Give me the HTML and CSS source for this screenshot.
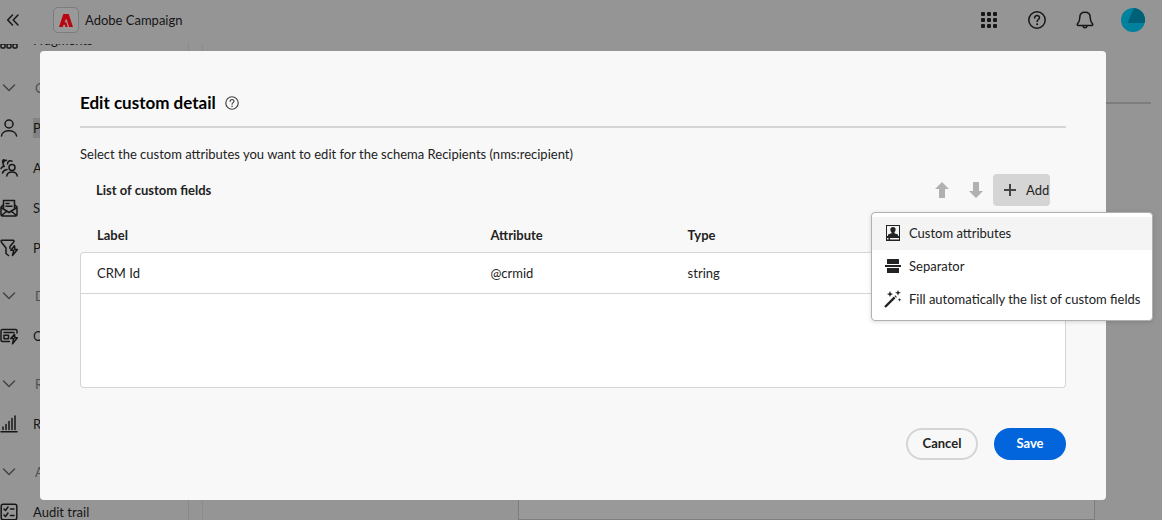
FILE: index.html
```html
<!DOCTYPE html>
<html lang="en">
<head>
<meta charset="utf-8">
<meta name="viewport" content="width=device-width, initial-scale=1">
<title>Adobe Campaign</title>
<link rel="stylesheet" href="styles.css">
</head>
<body>
<div class="app">
  <header class="topbar">
    <button class="icon-button collapse" aria-label="Collapse navigation"><svg width="14" height="14" viewBox="0 0 14 14"><path d="M6.500 2 1.700 7l4.800 5M12 2 7.200 7l4.800 5"/></svg></button>
    <span class="brand-mark"><svg width="14" height="13" viewBox="0 0 14 13"><path class="solid" d="M4.300 0h5.400L14 13h-3.800L8 6.500 7.100 4.500 5.600 8.300h1.700l1.500 4.700H6.500l-.8-2.200H4.500L3.800 13H0z"/></svg></span>
    <span class="brand">Adobe Campaign</span>
    <div class="top-actions">
      <button class="icon-button" aria-label="Apps"><svg class="solid-icon" width="18" height="18" viewBox="0 0 18 18"><rect x="1" y="1" width="4" height="4" rx="1"/><rect x="7" y="1" width="4" height="4" rx="1"/><rect x="13" y="1" width="4" height="4" rx="1"/><rect x="1" y="7" width="4" height="4" rx="1"/><rect x="7" y="7" width="4" height="4" rx="1"/><rect x="13" y="7" width="4" height="4" rx="1"/><rect x="1" y="13" width="4" height="4" rx="1"/><rect x="7" y="13" width="4" height="4" rx="1"/><rect x="13" y="13" width="4" height="4" rx="1"/></svg></button>
      <button class="icon-button" aria-label="Help"><svg width="18" height="18" viewBox="0 0 18 18"><circle cx="9" cy="9" r="8.200"/><path d="M6.600 6.900c0-3.300 5-3 4.900-.2 0 1.800-2.400 1.900-2.400 3.900"/><circle class="solid" cx="9.100" cy="13.300" r="1"/></svg></button>
      <button class="icon-button" aria-label="Notifications"><svg width="18" height="18" viewBox="0 0 18 18"><path d="M9 1.200c-3.300 0-5.200 2.300-5.200 5.200 0 4-1 5-2.200 6.300-.7.800-.3 1.700.7 1.700h13.400c1 0 1.400-.9.700-1.700-1.200-1.300-2.200-2.300-2.200-6.300 0-2.900-1.900-5.200-5.200-5.200zM7 15.200c.3 2.100 3.700 2.100 4 0"/></svg></button>
      <button class="icon-button" aria-label="Account"><svg class="avatar" width="24" height="24" viewBox="0 0 24 24"><circle cx="12" cy="12" r="12" fill="#00819e"/><path d="M13 0a12 12 0 0 1 10.600 15H6.500z" fill="#006078"/></svg></button>
    </div>
  </header>
  <div class="workspace">
    <nav class="sidebar" aria-label="Main">
      <ul class="nav-list">
        <li><a class="nav-item" href="#"><svg width="18" height="18" viewBox="0 0 18 18"><rect x="1" y="1" width="4" height="4" rx="1"/><rect x="7" y="1" width="4" height="4" rx="1"/><rect x="13" y="1" width="4" height="4" rx="1"/><rect x="1" y="13" width="4" height="4" rx="1"/><rect x="7" y="13" width="4" height="4" rx="1"/><rect x="13" y="13" width="4" height="4" rx="1"/></svg><span>Fragments</span></a></li>
        <li><button class="nav-group"><svg width="18" height="18" viewBox="0 0 18 18"><path d="m3.500 6 5.500 5.500L14.500 6"/></svg>CRM</button></li>
        <li><a class="nav-item" href="#" aria-current="page"><svg width="18" height="18" viewBox="0 0 18 18"><circle cx="9" cy="5" r="4"/><path d="M1.500 17c.5-7 14.500-7 15 0"/></svg><span>Profiles</span></a></li>
        <li><a class="nav-item" href="#"><svg width="18" height="18" viewBox="0 0 18 18"><circle cx="12" cy="8.500" r="3"/><path d="M6.800 17c.7-5.300 9.700-5.300 10.400 0M7.500 5C7.500 2 10 1 12 2.200M4.200 7.500C2 4.500 3.500 1.200 6.500 1.200M2.800 3.500C2.300 2 3 .8 4 .5M1 9.500Q2 7 4 7.500M2.500 14Q3.500 11 7 10.500"/></svg><span>Audiences</span></a></li>
        <li><a class="nav-item" href="#"><svg width="18" height="18" viewBox="0 0 18 18"><path d="M3.500 9V1.500h11V9M3.500 5.500 1 8v7.500Q1 17 2.500 17h13q1.500 0 1.500-1.500V8l-2.500-2.500M1 8.500l8 5 8-5M1.500 16.500 7 12M16.500 16.500 11 12M6 4.500h3M6 7.200h6"/></svg><span>Services</span></a></li>
        <li><a class="nav-item" href="#"><svg width="18" height="18" viewBox="0 0 18 18"><path d="M8.500 16.500 6 14.500V9L1.300 3C.8 2 1 1.300 2 1.300h11c1 0 1.300.7.7 1.700L10 7.500v2"/><path d="m14.500 6.800-3.700 4.500h3L12.500 16.500l5-6H15z"/></svg><span>Presets</span></a></li>
        <li><button class="nav-group"><svg width="18" height="18" viewBox="0 0 18 18"><path d="m3.500 6 5.500 5.500L14.500 6"/></svg>DECISION</button></li>
        <li><a class="nav-item" href="#"><svg width="18" height="18" viewBox="0 0 18 18"><path d="M9.500 14.500H2.500Q1 14.500 1 13V4q0-1.500 1.500-1.500h13Q17 2.500 17 4v2M4 5.500h10"/><rect x="4" y="8.200" width="4.500" height="3.500"/><path d="m14.500 7.300-3.700 4.200h3L12.500 16.800l5-6H15z"/></svg><span>Offers</span></a></li>
        <li><button class="nav-group"><svg width="18" height="18" viewBox="0 0 18 18"><path d="m3.500 6 5.500 5.500L14.500 6"/></svg>REPORTS</button></li>
        <li><a class="nav-item" href="#"><svg width="18" height="18" viewBox="0 0 18 18"><path d="M1 16.700h16M3 14.500V12M6 14.500V9.500M9 14.500v-8M12 14.500v-11M15 14.500V1"/></svg><span>Reports</span></a></li>
        <li><button class="nav-group"><svg width="18" height="18" viewBox="0 0 18 18"><path d="m3.500 6 5.500 5.500L14.500 6"/></svg>ADMIN</button></li>
        <li><a class="nav-item" href="#"><svg width="18" height="18" viewBox="0 0 18 18"><rect x="1.200" y="1.200" width="15.600" height="15.600" rx="2"/><path d="m4 6 1.500 1.500L8 4M10.500 6H14M4 12l1.500 1.500L8 10M10.500 12.500H14"/></svg><span>Audit trail</span></a></li>
      </ul>
    </nav>
    <main class="page">
      <div class="page-head"></div>
      <div class="page-body"><div class="page-panel"></div></div>
    </main>
  </div>
</div>

<div class="underlay">
  <section class="dialog" role="dialog" aria-modal="true" aria-labelledby="dialog-title">
    <header class="dialog-head">
      <h1 id="dialog-title" class="dialog-title">Edit custom detail</h1>
      <button class="icon-button help" aria-label="Help"><svg width="14" height="14" viewBox="0 0 18 18"><circle cx="9" cy="9" r="8"/><path d="M6.600 6.900c0-3.300 5-3 4.900-.2 0 1.800-2.400 1.900-2.400 3.900"/><circle class="solid" cx="9.100" cy="13.300" r="1"/></svg></button>
    </header>
    <p class="intro">Select the custom attributes you want to edit for the schema Recipients (nms:recipient)</p>
    <div class="toolbar">
      <h2 class="toolbar-title">List of custom fields</h2>
      <button class="move" disabled aria-label="Move up"><svg width="14" height="16" viewBox="0 0 14 16"><path d="M7 0 0 7h4v9h6V7h4z"/></svg></button>
      <button class="move" disabled aria-label="Move down"><svg width="14" height="16" viewBox="0 0 14 16"><path d="m7 16 7-7h-4V0H4v9H0z"/></svg></button>
      <div class="menu-anchor">
        <button class="add" aria-haspopup="menu" aria-expanded="true"><svg width="12" height="12" viewBox="0 0 12 12"><path d="M6 0v12M0 6h12"/></svg>Add</button>
        <div class="menu" role="menu">
          <button class="menu-item is-focused" role="menuitem"><svg width="18" height="18" viewBox="0 0 18 18"><path fill-rule="evenodd" d="M2 1h14v16H2zm1 1v10h12V2zm0 12v1.500h1.500V14zm3 0v1.500h9V14z"/><path d="M9 3C5.500 3 6 7 7.600 8.500v.8L4 10.500V13h10v-2.500l-3.600-1.200v-.8C12 7 12.500 3 9 3z"/></svg>Custom attributes</button>
          <button class="menu-item" role="menuitem"><svg width="18" height="18" viewBox="0 0 18 18"><path d="M3 2.500q0-.5.500-.5h11q.5 0 .5.500V7H3zM1 8h16v2H1zM3 11h12v4.500q0 .5-.5.500h-11q-.5 0-.5-.5z"/></svg>Separator</button>
          <button class="menu-item" role="menuitem"><svg width="18" height="18" viewBox="0 0 18 18"><path d="M.2 16.200 9.800 6.600l1.700 1.700-9.600 9.500zM10.500 6l.7-.7 1.700 1.700-.8.700zM6 1l.9 2.200L9 4l-2.100.9L6 7l-.9-2.100L3 4l2.100-.8zM14 0l.8 2 2.200.8-2.200.8-.8 2.200-.8-2.200-2.200-.8 2.200-.8zM15.500 8l.5 1.300 1.500.5-1.500.5-.5 1.400-.5-1.400-1.300-.5 1.300-.5z"/></svg>Fill automatically the list of custom fields</button>
        </div>
      </div>
    </div>
    <div class="fields">
      <table class="fields-table">
        <thead><tr><th class="wide" scope="col">Label</th><th scope="col">Attribute</th><th class="wide" scope="col">Type</th></tr></thead>
        <tbody><tr><td>CRM Id</td><td>@crmid</td><td>string</td></tr></tbody>
      </table>
      <div class="fields-rest"></div>
    </div>
    <footer class="dialog-foot">
      <button class="button button-outline">Cancel</button>
      <button class="button button-accent">Save</button>
    </footer>
  </section>
</div>
</body>
</html>
```
FILE: styles.css
```css
* { box-sizing: border-box; }
body { margin: 0; background: #959595; color: #222; font: 13px/20px Lato, "Noto Sans", sans-serif; }
button { margin: 0; padding: 0; border: 0; background: none; color: inherit; font: inherit; }
svg { display: block; flex: none; }

.app { display: flex; flex-direction: column; height: 100vh; overflow: hidden; color: #151515; }
.app svg { fill: none; stroke: #171717; stroke-width: 1.5; stroke-linecap: round; stroke-linejoin: round; }
.app .solid, .app .solid-icon { fill: #171717; stroke: none; }
.app .avatar { stroke: none; }

.topbar { display: flex; align-items: center; flex: none; height: 44px; padding: 0 17px 4px 6px; }
.collapse { margin-right: 33px; }
.brand-mark { display: grid; place-items: center; width: 26px; height: 26px; margin-right: 6px; border: 1px solid #7c7c7c; border-radius: 5px; background: #999; }
.app .brand-mark .solid { fill: #bb0610; }
.top-actions { display: flex; align-items: center; gap: 24px; margin-left: auto; }
.top-actions .icon-button { display: grid; place-items: center; width: 24px; }

.workspace { display: flex; flex: 1; min-height: 0; }
.sidebar { flex: none; width: 189px; overflow: hidden; border-right: 1px solid #898989; }
.nav-list { margin: -24px 0 0; padding: 0; list-style: none; }
.nav-item, .nav-group { display: flex; align-items: center; width: 100%; height: 40px; color: inherit; text-decoration: none; }
.nav-item { gap: 15px; }
.nav-item[aria-current] span { background: #838383; }
.nav-group { gap: 17px; margin-top: 8px; color: #505050; }
.app .nav-group svg { stroke: #444; }
.page { display: flex; flex-direction: column; flex: 1; margin-left: 13px; border-left: 1px solid #8c8c8c; }
.page-head { height: 60px; margin-right: 11px; border-bottom: 2px solid #7d7d7d; }
.page-body { display: flex; flex: 1; padding: 24px 67px 0 315px; }
.page-panel { flex: 1; border: 1px solid #7d7d7d; background: #999; }

.underlay { position: absolute; inset: 0; padding: 51px 56px 20px 40px; }
.dialog { padding: 40px; border-radius: 4px; background: #f8f8f8; }
.dialog-head { display: flex; align-items: center; gap: 9px; padding-bottom: 11px; border-bottom: 2px solid #d5d5d5; }
.dialog-title { margin: 0; color: #000; font-size: 17px; line-height: 24px; }
.help svg { fill: none; stroke: #444; stroke-width: 1.5; stroke-linecap: round; }
.help .solid { fill: #444; stroke: none; }
.intro { margin: 16px 0 10px; }
.toolbar { display: flex; align-items: center; gap: 1px; padding: 0 16px; }
.toolbar-title { flex: 1; margin: 0; font-size: 13px; line-height: 20px; }
.move { display: grid; place-items: center; width: 33px; height: 32px; }
.move svg { fill: #b1b1b1; }

.menu-anchor { position: relative; }
.add { display: flex; align-items: center; gap: 10px; width: 57px; height: 32px; padding-left: 11px; border-radius: 4px; background: #d5d5d5; }
.add svg { stroke: #444; stroke-width: 2; }
.menu { position: absolute; z-index: 1; top: 38px; right: -103px; width: 282px; padding: 4px 0; border: 1px solid #b1b1b1; border-radius: 4px; background: #fff; box-shadow: 0 1px 4px rgba(0, 0, 0, .15); }
.menu-item { display: flex; align-items: center; gap: 7px; width: 100%; height: 33px; padding: 0 12px 1px; white-space: nowrap; }
.menu-item svg { fill: #222; }
.is-focused { background: #f4f4f4; }

.fields { margin-top: 12px; }
.fields-table { width: 100%; table-layout: fixed; border-spacing: 0; text-align: left; }
.wide { width: 40%; }
.fields-table th { height: 34px; padding: 0 16px; }
.fields-table th:first-child { padding-left: 17px; }
.fields-table td { height: 42px; padding: 0 16px; border: solid #d5d5d5; border-width: 1px 0; background: #fff; }
.fields-table td:first-child { border-left-width: 1px; border-top-left-radius: 4px; }
.fields-table td:last-child { border-right-width: 1px; border-top-right-radius: 4px; }
.fields-rest { height: 94px; border: 1px solid #d5d5d5; border-top: 0; border-radius: 0 0 4px 4px; background: #fff; }

.dialog-foot { display: flex; justify-content: flex-end; gap: 16px; margin-top: 40px; }
.button { min-width: 72px; height: 32px; padding-bottom: 2px; border-radius: 16px; font-weight: 700; }
.button-outline { border: 2px solid #d5d5d5; }
.button-accent { background: #0265dc; color: #fff; }
```
